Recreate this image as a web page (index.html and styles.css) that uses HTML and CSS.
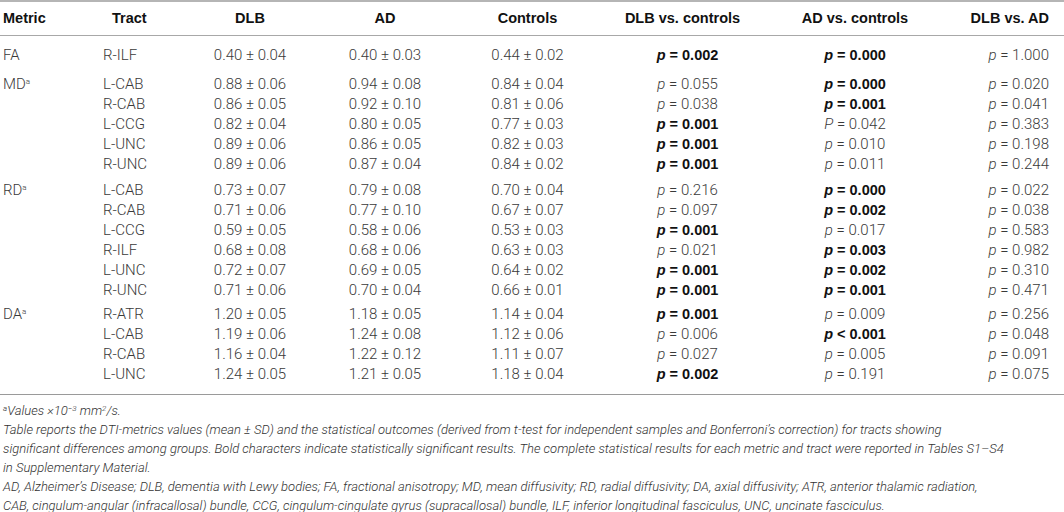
FILE: index.html
```html
<!DOCTYPE html>
<html lang="en">
  <head>
    <meta charset="UTF-8" />
    <title>DTI metrics</title>
    <link rel="stylesheet" href="styles.css">
  </head>
  <body>
    <div class="wrapper">
      <table class="stats">
        <thead>
          <tr>
            <th class="c-metric">Metric</th>
            <th class="c-tract">Tract</th>
            <th class="c-dlb">DLB</th>
            <th class="c-ad">AD</th>
            <th class="c-ctrl">Controls</th>
            <th class="c-p1">DLB vs. controls</th>
            <th class="c-p2">AD vs. controls</th>
            <th class="c-p3">DLB vs. AD</th>
          </tr>
        </thead>
        <tbody class="g-fa">
          <tr>
            <td>FA</td><td>R-ILF</td><td>0.40 ± 0.04</td><td>0.40 ± 0.03</td><td>0.44 ± 0.02</td>
            <td><b><i>p</i> = 0.002</b></td><td><b><i>p</i> = 0.000</b></td><td><i>p</i> = 1.000</td>
          </tr>
        </tbody>
        <tbody class="g-md">
          <tr>
            <td>MD<sup>a</sup></td><td>L-CAB</td><td>0.88 ± 0.06</td><td>0.94 ± 0.08</td><td>0.84 ± 0.04</td>
            <td><i>p</i> = 0.055</td><td><b><i>p</i> = 0.000</b></td><td><i>p</i> = 0.020</td>
          </tr>
          <tr>
            <td></td><td>R-CAB</td><td>0.86 ± 0.05</td><td>0.92 ± 0.10</td><td>0.81 ± 0.06</td>
            <td><i>p</i> = 0.038</td><td><b><i>p</i> = 0.001</b></td><td><i>p</i> = 0.041</td>
          </tr>
          <tr>
            <td></td><td>L-CCG</td><td>0.82 ± 0.04</td><td>0.80 ± 0.05</td><td>0.77 ± 0.03</td>
            <td><b><i>p</i> = 0.001</b></td><td><i>P</i> = 0.042</td><td><i>p</i> = 0.383</td>
          </tr>
          <tr>
            <td></td><td>L-UNC</td><td>0.89 ± 0.06</td><td>0.86 ± 0.05</td><td>0.82 ± 0.03</td>
            <td><b><i>p</i> = 0.001</b></td><td><i>p</i> = 0.010</td><td><i>p</i> = 0.198</td>
          </tr>
          <tr>
            <td></td><td>R-UNC</td><td>0.89 ± 0.06</td><td>0.87 ± 0.04</td><td>0.84 ± 0.02</td>
            <td><b><i>p</i> = 0.001</b></td><td><i>p</i> = 0.011</td><td><i>p</i> = 0.244</td>
          </tr>
        </tbody>
        <tbody class="g-rd">
          <tr>
            <td>RD<sup>a</sup></td><td>L-CAB</td><td>0.73 ± 0.07</td><td>0.79 ± 0.08</td><td>0.70 ± 0.04</td>
            <td><i>p</i> = 0.216</td><td><b><i>p</i> = 0.000</b></td><td><i>p</i> = 0.022</td>
          </tr>
          <tr>
            <td></td><td>R-CAB</td><td>0.71 ± 0.06</td><td>0.77 ± 0.10</td><td>0.67 ± 0.07</td>
            <td><i>p</i> = 0.097</td><td><b><i>p</i> = 0.002</b></td><td><i>p</i> = 0.038</td>
          </tr>
          <tr>
            <td></td><td>L-CCG</td><td>0.59 ± 0.05</td><td>0.58 ± 0.06</td><td>0.53 ± 0.03</td>
            <td><b><i>p</i> = 0.001</b></td><td><i>p</i> = 0.017</td><td><i>p</i> = 0.583</td>
          </tr>
          <tr>
            <td></td><td>R-ILF</td><td>0.68 ± 0.08</td><td>0.68 ± 0.06</td><td>0.63 ± 0.03</td>
            <td><i>p</i> = 0.021</td><td><b><i>p</i> = 0.003</b></td><td><i>p</i> = 0.982</td>
          </tr>
          <tr>
            <td></td><td>L-UNC</td><td>0.72 ± 0.07</td><td>0.69 ± 0.05</td><td>0.64 ± 0.02</td>
            <td><b><i>p</i> = 0.001</b></td><td><b><i>p</i> = 0.002</b></td><td><i>p</i> = 0.310</td>
          </tr>
          <tr>
            <td></td><td>R-UNC</td><td>0.71 ± 0.06</td><td>0.70 ± 0.04</td><td>0.66 ± 0.01</td>
            <td><b><i>p</i> = 0.001</b></td><td><b><i>p</i> = 0.001</b></td><td><i>p</i> = 0.471</td>
          </tr>
        </tbody>
        <tbody class="g-da">
          <tr>
            <td>DA<sup>a</sup></td><td>R-ATR</td><td>1.20 ± 0.05</td><td>1.18 ± 0.05</td><td>1.14 ± 0.04</td>
            <td><b><i>p</i> = 0.001</b></td><td><i>p</i> = 0.009</td><td><i>p</i> = 0.256</td>
          </tr>
          <tr>
            <td></td><td>L-CAB</td><td>1.19 ± 0.06</td><td>1.24 ± 0.08</td><td>1.12 ± 0.06</td>
            <td><i>p</i> = 0.006</td><td><b><i>p</i> &lt; 0.001</b></td><td><i>p</i> = 0.048</td>
          </tr>
          <tr>
            <td></td><td>R-CAB</td><td>1.16 ± 0.04</td><td>1.22 ± 0.12</td><td>1.11 ± 0.07</td>
            <td><i>p</i> = 0.027</td><td><i>p</i> = 0.005</td><td><i>p</i> = 0.091</td>
          </tr>
          <tr>
            <td></td><td>L-UNC</td><td>1.24 ± 0.05</td><td>1.21 ± 0.05</td><td>1.18 ± 0.04</td>
            <td><b><i>p</i> = 0.002</b></td><td><i>p</i> = 0.191</td><td><i>p</i> = 0.075</td>
          </tr>
        </tbody>
      </table>

      <div class="notes">
        <p><sup>a</sup>Values ×10<sup>−3</sup> mm<sup>2</sup>/s.</p>
        <p>Table reports the DTI-metrics values (mean ± SD) and the statistical outcomes (derived from t-test for independent samples and Bonferroni’s correction) for tracts showing<br>
          significant differences among groups. Bold characters indicate statistically significant results. The complete statistical results for each metric and tract were reported in Tables S1–S4<br>
          in Supplementary Material.</p>
        <p>AD, Alzheimer’s Disease; DLB, dementia with Lewy bodies; FA, fractional anisotropy; MD, mean diffusivity; RD, radial diffusivity; DA, axial diffusivity; ATR, anterior thalamic radiation,<br>
          CAB, cingulum-angular (infracallosal) bundle, CCG, cingulum-cingulate gyrus (supracallosal) bundle, ILF, inferior longitudinal fasciculus, UNC, uncinate fasciculus.</p>
      </div>
    </div>
  </body>
</html>
```

FILE: styles.css
```css
* {
  margin: 0;
  padding: 0;
  box-sizing: border-box;
}
body {
  background: #fff;
  color: #3a3a3a;
  font-family: Roboto, "Liberation Sans", sans-serif;
  font-weight: 300;
}
.wrapper {
  width: 1064px;
}
.stats {
  width: 1064px;
  border-collapse: collapse;
  table-layout: fixed;
  border-top: 2px solid #b5b5b5;
  border-bottom: 1px solid #9a9a9a;
  font-size: 15px;
}
.stats th {
  height: 34px;
  font-family: "Liberation Sans", Arial, sans-serif;
  font-weight: bold;
  font-size: 14.5px;
  color: #111;
  text-align: center;
  border-bottom: 1px solid #a8a8a8;
  white-space: nowrap;
}
.stats td {
  height: 20px;
  line-height: 20px;
  padding: 0;
  text-align: center;
  white-space: nowrap;
}
.stats b {
  font-family: "Liberation Sans", Arial, sans-serif;
  font-weight: bold;
  font-size: 14.5px;
  color: #111;
}
.stats i {
  font-style: italic;
}
.stats sup {
  font-size: 8px;
  vertical-align: 5px;
  line-height: 0;
}
.c-metric { width: 100px; }
.c-tract { width: 75px; }
.c-dlb { width: 150px; }
.c-ad { width: 120px; }
.c-ctrl { width: 165px; }
.c-p1 { width: 145px; }
.c-p2 { width: 200px; }
.c-p3 { width: 109px; }

.stats th.c-metric,
.stats td:nth-child(1) {
  text-align: left;
  padding-left: 3px;
}
.stats th.c-tract {
  text-align: left;
  padding-left: 12px;
}
.stats td:nth-child(2) {
  text-align: left;
  padding-left: 3px;
}
.stats td:nth-child(6) {
  padding-left: 10px;
}
.stats th.c-p3,
.stats td:nth-child(8) {
  text-align: right;
  padding-right: 15px;
}

.g-fa tr:first-child td { padding-top: 9px; }
.g-md tr:first-child td { padding-top: 9px; }
.g-rd tr:first-child td { padding-top: 6px; }
.g-da tr:first-child td { padding-top: 4px; }
.g-da tr:last-child td { padding-bottom: 10px; }

.notes {
  padding: 6px 3px 0;
  font-size: 13px;
  font-style: italic;
  line-height: 19px;
  color: #333;
}
.notes sup {
  font-size: 8px;
  vertical-align: 4px;
  line-height: 0;
}
```
